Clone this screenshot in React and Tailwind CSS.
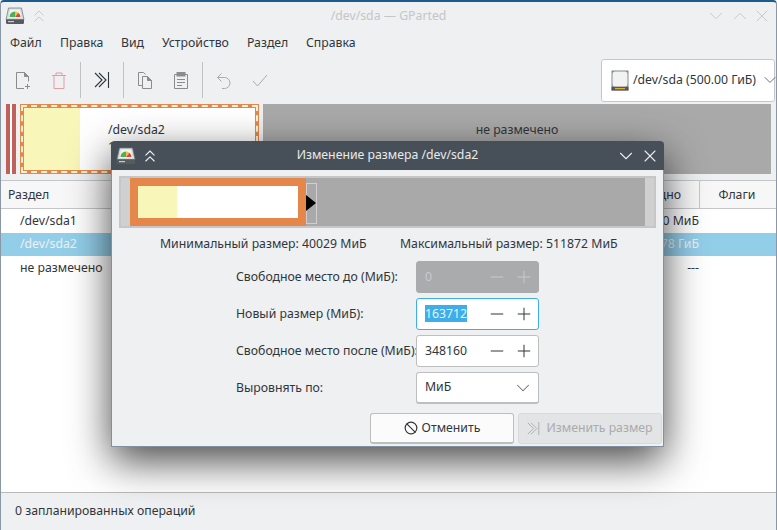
import { ChevronDown, ChevronUp, ChevronsUp, Minus, Plus, X, Ban } from "lucide-react";

const font = { fontFamily: '"Noto Sans", sans-serif' };

const AppIcon = () => (
  <svg width="20" height="18" viewBox="0 0 20 18" className="shrink-0">
    <path d="M3.5 1h13l2.5 11.5H1z" fill="#d5dadb" stroke="#6f7679" strokeWidth="0.7" />
    <path d="M5 2.5h10l1.5 8.5h-13z" fill="#f2f3ef" />
    <path d="M4.5 10a5.5 5.5 0 0 1 5.5-5.5V10z" fill="#4fae57" />
    <path d="M10 4.5a5.5 5.5 0 0 1 3.4 1.2L10 10z" fill="#e8c547" />
    <path d="M13.4 5.7a5.5 5.5 0 0 1 2.1 4.3H10z" fill="#d9483f" />
    <path d="M1 12.5h18v3a1.5 1.5 0 0 1-1.5 1.5h-15A1.5 1.5 0 0 1 1 15.5z" fill="#565b5e" />
    <rect x="3" y="14" width="6" height="1.2" fill="#c9cdce" />
  </svg>
);

const DiskIcon = () => (
  <svg width="18" height="21" viewBox="0 0 18 21" className="shrink-0">
    <rect x="0.5" y="0.5" width="17" height="20" fill="#858b8d" />
    <path d="M4 1.5h10a2.5 2.5 0 0 1 2.5 2.5v10a2.5 2.5 0 0 1-2.5 2.5H4A2.5 2.5 0 0 1 1.5 14V4A2.5 2.5 0 0 1 4 1.5z" fill="#f1f2f1" />
    <rect x="0.5" y="17" width="17" height="3.5" fill="#55595b" />
    <rect x="4" y="18" width="10" height="1.2" fill="#e0a93c" />
  </svg>
);

const ResizeIcon = ({ color, size = 16 }) => (
  <svg width={size} height={size} viewBox="0 0 16 16" fill="none" stroke={color} strokeWidth="1.1">
    <path d="M1 1 8 8 1 15M5 1 12 8 5 15" />
    <path d="M14.5 0v16" />
  </svg>
);

const Separator = () => <div className="w-px h-[36px] bg-[#c0c2c4] mx-[3px]" />;

const ToolButton = ({ children }) => (
  <div className="w-[36px] h-[36px] flex items-center justify-center">{children}</div>
);

const Toolbar = () => (
  <div className="flex items-center pl-[4px]">
    <ToolButton>
      <svg width="16" height="17" viewBox="0 0 16 17" fill="none" stroke="#8a8c8e">
        <path d="M9 16.5H1.5v-16h8l4 4v5" />
        <path d="M9.5.5l4 4h-4z" fill="#8a8c8e" />
        <path d="M10 14.5h5M12.5 12v5" />
      </svg>
    </ToolButton>
    <ToolButton>
      <svg width="16" height="17" viewBox="0 0 16 17" fill="none" stroke="#e49ca3">
        <path d="M1 3.5h14M5 3.5v-2.500h6v2.500M3 3.500v13h10v-13" />
      </svg>
    </ToolButton>
    <Separator />
    <ToolButton>
      <ResizeIcon color="#31363b" />
    </ToolButton>
    <Separator />
    <ToolButton>
      <svg width="16" height="17" viewBox="0 0 16 17" fill="none" stroke="#8a8c8e">
        <path d="M5 13.500H1.500v-13h5l2 2" />
        <path d="M5.500 4.500h5l4 4v8h-9z" />
        <path d="M10.500 4.500l4 4h-4z" fill="#8a8c8e" />
      </svg>
    </ToolButton>
    <ToolButton>
      <svg width="16" height="17" viewBox="0 0 16 17" fill="none" stroke="#8a8c8e">
        <path d="M4 2.500H1.500v14h13v-14H12" />
        <rect x="4" y="0.500" width="8" height="3.500" fill="#8a8c8e" />
        <path d="M4 7.500h8M4 10.500h8M4 13.500h5" />
      </svg>
    </ToolButton>
    <Separator />
    <ToolButton>
      <svg width="16" height="17" viewBox="0 0 16 17" fill="none" stroke="#a9abad">
        <path d="M5.500 1.500 1.500 5.500l4 4M1.500 5.500h7a5.500 5.500 0 0 1 0 11H6" />
      </svg>
    </ToolButton>
    <ToolButton>
      <svg width="16" height="13" viewBox="0 0 16 13" fill="none" stroke="#a9abad">
        <path d="M1 7l4.500 5L15 1" />
      </svg>
    </ToolButton>
  </div>
);

const Row = ({ name, size, selected }) => (
  <div className={"h-[23.5px] flex items-center " + (selected ? "bg-[#93cee9] text-[#eff0f1]" : "text-[#31363b]")}>
    <div className="w-[698px] pl-[19px] flex justify-between">
      <span>{name}</span>
      <span>{size}</span>
    </div>
  </div>
);

const SpinBox = ({ value, disabled, focused, selected }) => (
  <div
    className={
      "w-[123px] h-[32px] rounded-[3px] border flex items-center pl-[8px] pr-[4px] " +
      (disabled
        ? "bg-[#a9abad] border-[#a9abad] text-[#c8cacc]"
        : focused
          ? "bg-white border-[#3daee9] text-[#31363b]"
          : "bg-white border-[#bcbebf] text-[#31363b]")
    }
  >
    <span className="flex-1">
      <span className={selected ? "bg-[#3daee9] text-[#e8f4fb]" : ""}>{value}</span>
    </span>
    <Minus size={20} strokeWidth={1.2} className="mr-[7.5px]" />
    <Plus size={20} strokeWidth={1.2} />
  </div>
);

const FormRow = ({ label, children }) => (
  <div className="flex items-center h-[32px]">
    <div className="w-[180px] text-[#31363b] whitespace-nowrap">{label}</div>
    {children}
  </div>
);

const ResizeDialog = () => (
  <div className="absolute left-[110px] top-[139px] w-[553px] h-[306px] flex flex-col rounded-t-[4px] border-l border-b border-r border-[#8190a0] bg-[#eff0f1] shadow-[0_14px_40px_rgba(0,0,0,0.72)]">
    <div className="h-[29px] -mx-px rounded-t-[4px] bg-[#475058] flex items-center relative text-[#e8eaeb]">
      <div className="ml-[5px] flex items-center"><AppIcon /></div>
      <ChevronsUp size={20} strokeWidth={1.4} className="ml-[4px]" />
      <div className="absolute inset-x-0 text-center">Изменение размера /dev/sda2</div>
      <div className="ml-auto flex items-center gap-[3px] pr-[4px] relative">
        <ChevronDown size={22} strokeWidth={1.2} />
        <X size={20} strokeWidth={1.3} />
      </div>
    </div>

    <div className="mx-[7px] mt-[6px] h-[52px] border-2 border-[#c4c6c8] bg-[#d0d0d0] flex pl-[9px] pr-[9px]">
      <div className="w-[176px] bg-[#e5874a] p-[8px] flex">
        <div className="w-[39px] bg-[#f8f6b8]" />
        <div className="flex-1 bg-white" />
      </div>
      <div className="flex-1 bg-[#a9a9a9] relative">
        <div className="absolute left-0 top-[5px] w-[11px] h-[41px] border border-[#d0d0d0]" />
        <div className="absolute left-0 top-[17px] border-y-[8.5px] border-y-transparent border-l-[10px] border-l-black" />
      </div>
    </div>

    <div className="flex mt-[6px] h-[20px] items-center text-[#31363b]">
      <span className="ml-[48px] w-[240px] whitespace-nowrap">Минимальный размер: 40029 МиБ</span>
      <span className="whitespace-nowrap">Максимальный размер: 511872 МиБ</span>
    </div>

    <div className="flex flex-col gap-[5px] mt-[7px] ml-[124px]">
      <FormRow label="Свободное место до (МиБ):">
        <SpinBox value="0" disabled />
      </FormRow>
      <FormRow label="Новый размер (МиБ):">
        <SpinBox value="163712" focused selected />
      </FormRow>
      <FormRow label="Свободное место после (МиБ):">
        <SpinBox value="348160" />
      </FormRow>
      <FormRow label="Выровнять по:">
        <div className="w-[123px] h-[32px] rounded-[3px] border border-b-2 border-[#bcbebf] bg-white flex items-center justify-between pl-[8px] pr-[4px] text-[#31363b]">
          <span>МиБ</span>
          <ChevronDown size={22} strokeWidth={1.1} className="text-[#6b7074]" />
        </div>
      </FormRow>
    </div>

    <div className="flex justify-end gap-[4px] mt-[9px] pr-[1px]">
      <div className="w-[144px] h-[31px] rounded-[3px] border border-b-2 border-[#bcbebf] bg-[#fbfbfb] flex items-center justify-center gap-[4px] text-[#31363b]">
        <Ban size={14} strokeWidth={2} />
        <span>Отменить</span>
      </div>
      <div className="w-[144px] h-[31px] rounded-[3px] border border-[#d8dadb] bg-[#e3e4e5] flex items-center justify-center gap-[6px] text-[#a9abad]">
        <ResizeIcon color="#a9abad" size={13} />
        <span>Изменить размер</span>
      </div>
    </div>
  </div>
);

export default function App() {
  return (
    <div
      style={font}
      className="relative w-[777px] h-[530px] overflow-hidden flex flex-col text-[12.28px] leading-none bg-[#eff0f1] border-x border-[#8a97a4] border-t-2 border-t-[#1d5a8e] rounded-t-[4px] text-[#31363b]"
    >
      {/* title bar */}
      <div className="h-[28px] flex items-center relative text-[#c4c6c8]">
        <div className="ml-[4px] flex items-center"><AppIcon /></div>
        <ChevronsUp size={20} strokeWidth={1.1} className="ml-[4px]" />
        <div className="absolute inset-x-0 text-center">/dev/sda — GParted</div>
        <div className="ml-auto flex items-center gap-[1.5px] pr-[4px] relative">
          <ChevronDown size={22} strokeWidth={1} />
          <ChevronUp size={22} strokeWidth={1} />
          <X size={20} strokeWidth={1.1} />
        </div>
      </div>

      {/* menu */}
      <div className="h-[27px] flex items-center pl-[9px]">
        <span className="w-[50px]">Файл</span>
        <span className="w-[61px]">Правка</span>
        <span className="w-[41px]">Вид</span>
        <span className="w-[85px]">Устройство</span>
        <span className="w-[59px]">Раздел</span>
        <span>Справка</span>
      </div>

      {/* toolbar */}
      <div className="h-[46px] flex items-center justify-between pr-px">
        <Toolbar />
        <div className="w-[174px] h-[43px] rounded-[3px] border border-[#c4c6c8] bg-white flex items-center pl-[9px] gap-[4px]">
          <DiskIcon />
          <span className="whitespace-nowrap">/dev/sda (500.00 ГиБ)</span>
          <ChevronDown size={20} strokeWidth={1.2} className="shrink-0 text-[#6b7074]" />
        </div>
      </div>

      {/* partition map */}
      <div className="h-[70px] mt-[1px] flex pl-[5px] pr-[5px] gap-[4px]">
        <div className="w-[10px] border-x-[4px] border-[#c0605a] bg-white" />
        <div className="w-[239px] border-[4px] border-[#e5874a] flex relative">
          <div className="absolute inset-[-3px] border-2 border-dashed border-[#fbf3d8]" />
          <div className="w-[56px] shrink-0 bg-[#f8f6b8]" />
          <div className="flex-1 bg-white flex flex-col items-start pt-[16px] gap-[5px] pl-[28px]">
            <span>/dev/sda2</span>
            <span className="whitespace-nowrap">159.88 ГиБ</span>
          </div>
        </div>
        <div className="flex-1 bg-[#a9a9a9] flex flex-col items-center pt-[20px]">
          <span>не размечено</span>
        </div>
      </div>

      {/* partition table */}
      <div className="mt-[6px] flex-1 bg-white flex flex-col">
        <div className="h-[29px] flex items-center border-y border-[#c4c6c8] bg-[#f7f7f8]">
          <div className="w-[699px] pl-[7px] pt-[1px] flex justify-between pr-[18px] border-r border-[#c4c6c8] h-full items-center">
            <span>Раздел</span>
            <span>Свободно</span>
          </div>
          <div className="flex-1 text-center pt-[1px] pr-[2px]">Флаги</div>
        </div>
        <Row name="/dev/sda1" size="0 МиБ" />
        <Row name="/dev/sda2" size="78 ГиБ" selected />
        <Row name="не размечено" size="---" />
      </div>

      {/* status bar */}
      <div className="h-[38px] border-t border-[#b8babc] flex items-center pl-[14px]">
        0 запланированных операций
      </div>

      <ResizeDialog />
    </div>
  );
}
